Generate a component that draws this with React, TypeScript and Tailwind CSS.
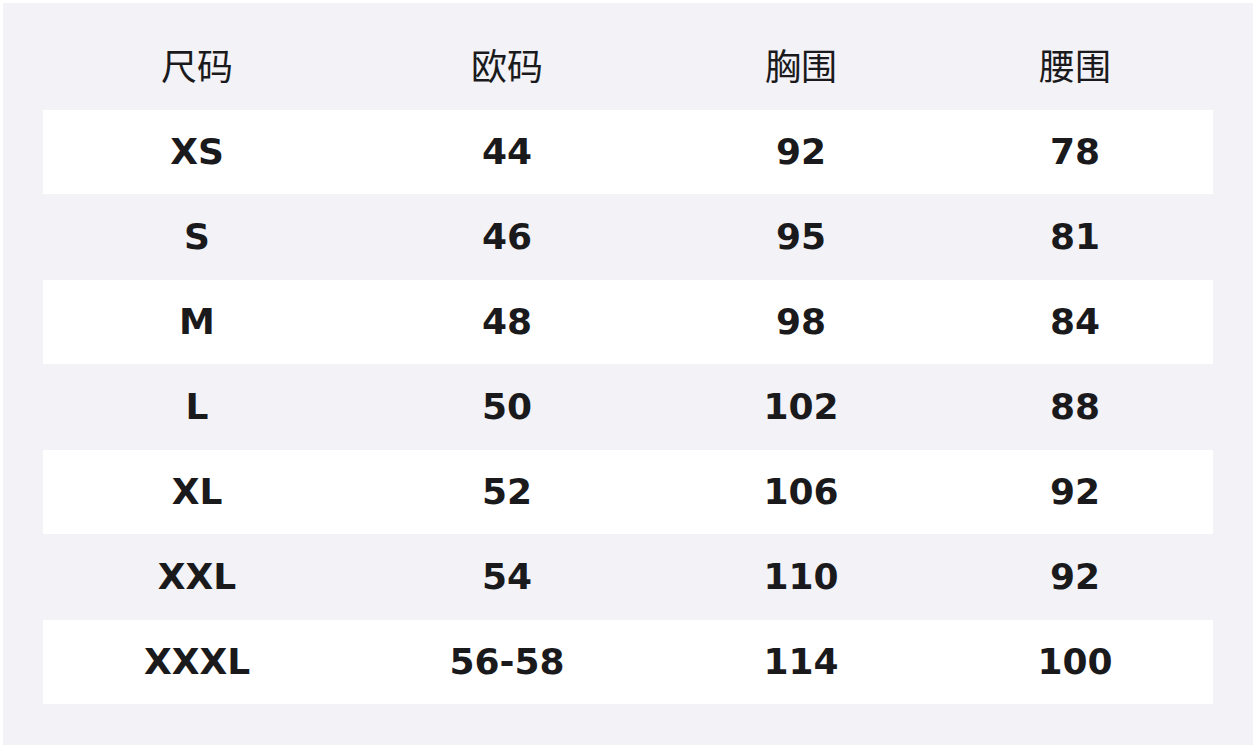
import React from "react";

const rows = [
  ["XS", "44", "92", "78"],
  ["S", "46", "95", "81"],
  ["M", "48", "98", "84"],
  ["L", "50", "102", "88"],
  ["XL", "52", "106", "92"],
  ["XXL", "54", "110", "92"],
  ["XXXL", "56-58", "114", "100"],
];

const cols = "grid grid-cols-[308px_312px_276px_272px]";

export default function App() {
  return (
    <div className="w-[1256px] h-[748px] bg-white p-[3px]">
      <div className="w-[1250px] h-[742px] bg-[#f2f2f7] px-[40px] pt-[22px]">
        <div
          className={`${cols} h-[85px] items-center text-[36px] text-[#1a1a1c] pb-[8px]`}
          style={{ fontFamily: '"Noto Sans CJK SC", "Noto Sans", sans-serif' }}
        >
          <div className="text-center">尺码</div>
          <div className="text-center">欧码</div>
          <div className="text-center">胸围</div>
          <div className="text-center">腰围</div>
        </div>
        <div style={{ fontFamily: '"DejaVu Sans", sans-serif' }}>
          {rows.map((r, i) => (
            <div
              key={i}
              className={`${cols} ${i % 2 === 0 ? "bg-white h-[84px]" : "h-[86px]"} w-[1170px] items-center text-[36px] font-bold text-[#1a1a1c]`}
            >
              {r.map((c, j) => (
                <div key={j} className="text-center leading-none">
                  {c}
                </div>
              ))}
            </div>
          ))}
        </div>
      </div>
    </div>
  );
}
